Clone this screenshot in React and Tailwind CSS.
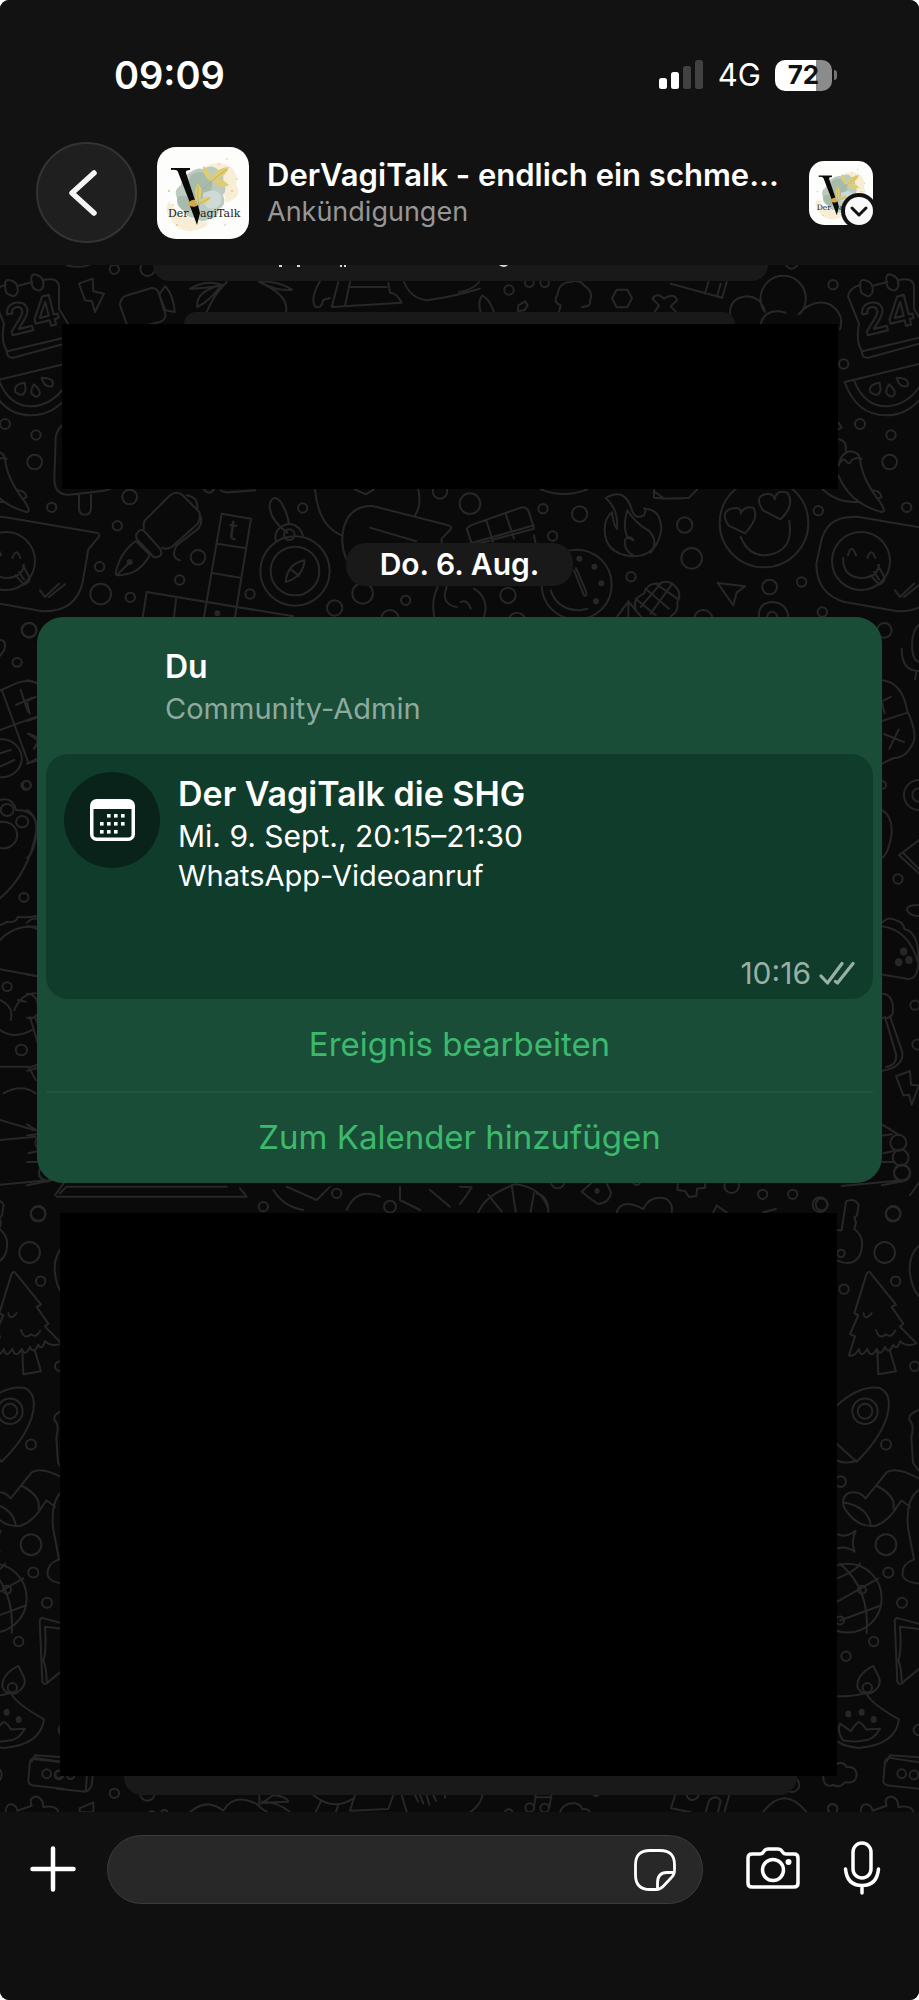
import React from "react";

/* Each sheet holds one region of the wallpaper: a placement, line art, rings and solid dots. */
const sheets = [
  {
    at: "translate(0 262) scale(.33333)",
    paths: [
      "M185 490q-18 20-18 40L163 650q0 50 45 48L300 688q25-3 32-8M237 698V738q0 20 18 20q18 0 18-20V698",
      "M237 65L278 50L280 88L312 95L285 150L276 118L255 115z",
      "M380 186L360 130q0-18 15-28L455 78q15 0 20 12L497 160q-3 15-18 20L440 190M478 97l18-25q25 30 28 78l-28-5z",
      "M570 80q50-30 100-10q-60 10-100 10M665 68q-80 20-73 67q40-20 73-67M680 60q-40 40-60 90M778 58q60 0 98 25q-50 5-98-25M778 60q90 40 80 90",
      "M960 58q-30 50-15 75q20 10 25-20l20-5M1015 60L995 135L1205 122q-15-30-35-30l-5-30M1050 60l-15 72M1050 75h110M1212 60q20 50 70 55q70-10 158-35",
      "M347 935q10-60 60-98L450 878q-30 55-80 60q-20 5-23-3zM355 935l32-32M410 815q12-20 25-5l45 50q10 20-5 24q-15 5-20-5l-42-45q-8-10-3-19z",
      "M432 800q-5-20 8-30L510 700q20-15 38 0L598 750q5 20-5 35L515 855q-15 8-28 3M560 700q35 5 32 40M600 760q10 20-5 40L530 850q-20 35 10 45",
      "M665 755L753 770L705 1065M665 755L612 1065M650 845L735 858M637 933L720 947M428 1065L440 990L880 1063M528 1012L522 1065",
      "M857 960q5-55 57-65q-5 50-57 65zM870 920l28 22M828 840q-10-45 40-55q35 5 42 40M862 812q-55-40-53-85q10-35 35-5q20 35 22 62",
      "M945 682q10 110 80 138M1255 682q10 50-10 78M1065 682l32 15 25-15M1038 890q-20-50-5-100q20-60 85-58L1345 790q15 5 5 14L1325 830V843M1110 797L1248 838",
      "M612 682q15 20 30 0M662 685q10 8 25 6L765 685M1303 1065q-10-50 10-90M1340 975q-20 50 30 60M200 10q40 10 70-2",
    ],
    circles: [[343,22,14],[443,20,22],[389,705,22],[352,791,14],[299,914,14],[302,996,31],[391,1006,14],[539,954,14],[594,886,22],[750,996,14],[908,738,14],[1320,688,22],[1088,994,31],[1217,1015,14],[1004,1038,23],[1170,1070,26],[885,927,104],[885,927,73],[868,818,16]],
    dots: [[389,900,6],[652,1054,6]],
  },
  {
    at: "translate(459 262) scale(.33333)",
    paths: [
      "M1205 68q-35 10-38 35L1200 185q-10 55 8 80q0 25 20 22L1400 240M1210 268L1390 225M1240 72L1285 60M1318 54q45-10 47 20V140L1395 190",
      "M1207 92q-12-45 12-37q25 5 22 35q-8 20-25 8q-6-2-9-6zM1284 70q-8-38 12-32q25 5 22 35q-8 20-25 8q-6-2-9-11z",
      "M1157 360L1385 305M1157 360q35 100 125 100q60 0 103-50M1185 355q30 78 98 78q60-3 100-60",
      "M1262 362q-35 5-28 28q25 20 31-8zM1290 367q-20 30 8 37q22-10-8-37zM1313 347q8 32 32 25q10-24-32-25z",
      "M1140 610q5-38 35-42q25 3 28 22q5 60 60 130q20 30 5 30q-95-25-130-110M1145 600q10-15 18 0q8 10 15-5q10-10 30-5M1140 532q25 5 20 35M1238 685q25 0 30 20l-10 5M1090 682q50 45 110 37M1138 482l10 15-10 5",
      "M1180 765q10-2 20 0L1478 812q12 4 5 14L1453 862L1436 960q-20 90-120 88L1157 1020q-85-25-85-115L1085 845q15-80 95-80z",
      "M1167 880q10-40 24 0M1225 888q12-35 24 0M1152 888q0 60 60 60q45-5 48-40M1235 940l25 28q25-10 12-30l-15-28M1245 930l15 22M1308 985l15 20 42-40M1335 1005l48-38",
      "M858 814L808 790q-30-50 25-52q15 3 12 17q10-25 38-18q20 30-25 77zM965 772L912 745q-30-45 15-50q20 3 20 17q5-30 38-20q25 35-20 80zM845 825q25 60 80 54q80-10 66-102",
      "M440 708q60-35 80 40q10 25 35 12q10-25 0-20q50 0 52 60q-10 85-90 83q-80-10-80-80q0-35 22-52q5 40 15 50q5-60-34-93zM505 745q25 40 65 62q30 30 5 65M505 745q-15 50 0 80q15 0 18 10q-30-20-25 15q5 20 25 30",
      "M35 790L185 737q20-5 25 15L225 800L40 850L23 800zM82 775l20 65M140 755l25 75M30 845L225 790M225 820l5 25",
      "M275 985q20 60 90 60l20-5M345 925l30 75q10 5 6-12l-30-70M475 1063l33-45 40 48M508 1018v45",
      "M776 963L858 973L833 992L823 1030zM900 1063q-2-42 42-43q40 3 46 43M925 1065q0-15 15-16q15 5 15 16M45 980q35 20 35 60l-5 25M5 1020q20-10 30 20",
      "M918 150q-10-45-55-47q-60 5-48 70M918 150a68 68 0 1 1 105 5M1018 157q45-50 95-30q45 30 30 75M905 185q15-50 75-33",
      "M473 83h32l14 26-14 27h-32l-14-27zM588 148l12-18-20-20q15-20 35 0q30-20 40 5l-20 18 15 15",
      "M300 150l5-20q-25-10-10-30q5-40 40-40q25-10 40 10q30 20 18 45q5 20-25 20M178 130l20-12 8 12-10 15-20 2zM65 150q-10-30 5-50q20 10 35 50M635 65L790 107L803 60M738 95l10-35M775 100l10-35",
      "M585 682v25q50 5 105 0l25-25M588 690l25 18M0 90q40-5 60-30M245 682q70 28 140 0M530 1010l60 50M560 980l70 60M590 965l65 45M640 965l-65 90M605 965l-60 70",
      "M530 1040q-10-30 25-45q10-35 45-30q30-15 50 10q20 20 5 45q5 30-20 43",
    ],
    circles: [[1122,68,14],[150,84,14],[1154,306,14],[1203,486,15],[1296,519,14],[1292,600,22],[1343,736,14],[1078,746,14],[33,725,31],[252,740,14],[362,756,23],[281,822,14],[677,789,23],[698,889,31],[516,944,14],[147,1000,23],[932,975,22],[1028,960,14],[1090,1050,14],[733,1072,28],[174,1078,26],[998,2,18],[1206,897,87],[915,783,133],[353,968,105],[211,62,13],[257,62,13]],
    dots: [[361,890,6],[406,914,6],[427,964,6],[411,1018,6]],
  },
  {
    at: "translate(860 610) scale(.33333 .37)",
    paths: [
      "M125 105q0 60 50 60M177 40q-25 20-20 70q5 30 20 30M170 165l-5 22",
      "M66 190q60 5 75 80q30 60 20 85q-20 45-60 45L66 415M66 300L140 278M88 375l28-52M72 335l60 22M70 245l22-10M66 250l8 30",
      "M66 540q35 20 28 70q-10 50-28 60M177 622L117 663L177 712M128 655l49 45M177 797q-40 0-36 15q10 15 36 15",
      "M66 845q20-20 45-5q20 5 22 22q45 10 42 85q0 50-30 50L66 985M66 855q80 10 107 95M66 1037q35 0 33 50q-5 20-33 15M75 1100L108 1200q5 30-30 35M90 1098L127 1195q5 40-60 50",
      "M108 1260L150 1246L153 1283L177 1285L155 1337L147 1310L130 1312zM66 1390L115 1418M66 1420l30-3M70 1468l30-6M66 1492h38M66 1555L130 1543",
    ],
    circles: [[73,55,22],[177,500,45],[177,500,20],[114,727,14],[165,1068,14],[172,1174,15],[115,1440,24],[122,1480,24],[126,1520,24],[66,473,12]],
    dots: [[131,923,8],[116,952,8],[147,946,8]],
    squash: 0.9,
  },
  {
    at: "translate(820 1170) scale(.33333 .421)",
    paths: [
      "M50 143L65 143L78 75q25-10 38 8l-5 25-8 5 5 12-5 15q35 20 18 60q-15 25-50 20l-20-5M65 38L240 25M270 60l27-30",
      "M150 243q-8-3-12 8L103 340L115 345L90 390L105 395L87 440q15 5 30-15q5 25 25 0q10 25 28 0q10 20 25-5q10 20 25-5q10 15 20-8q20 15 50 5L240 372L250 365L215 325L228 320zM172 430L175 485L228 478L210 430M130 340q5 20 25 0M168 380q10 25 30 10q15 10 28-8",
      "M50 560q70-50 130-42q40 15 20 70q-20 50-90 105L50 650M50 690q30 10 60 0",
      "M137 780L200 718q30-15 97 15M137 780q-20-20-50-13q-25 10-15 35q40 50 95 43q40-10 70-52l8-8 25 15M170 750q60 25 50 55M72 790q70 10 80 52M297 760q-40 20-33 90L282 925q-35 10-35 35q5 20 50 22",
      "M52 865q25 10 55-8q-15 25-3 50q-25-15-52-8M60 935q90 60 80 165M52 970q60-20 68-35M52 1025L175 970M60 1070L180 1035",
      "M224 1070q5-8 12-5L297 1078M224 1070L232 1215q5 8 12 5L297 1185M240 1085L297 1090M240 1085q5 60-5 80q10 20 10 50",
      "M52 1250q70 0 85-10q10 25 100 65q-10 60-120 68q-50-5-62-15M160 1178q-50 20-48 50q10 20 40 15q35-15 25-38q-10-15-17-27zM60 1315q-10 20 10 40q40 5 60 0q30 0 50-28l-42 2q-10-15-23-18q-15 10-22 22z",
      "M195 1405q5-10 20-8L297 1407M200 1405l10-15L297 1395M195 1405L190 1450q0 10 15 12L297 1470M122 1525q0-20 20-18q15 5 15 15L200 1510q-10-20 15-22q20 5 20 25q40-5 45 12M297 180q-30 20-28 60q5 40 28 60M297 570q-35 10-28 25q15 10 5 40l5 60 18 20",
    ],
    circles: [[219,105,22],[194,196,31],[227,264,14],[72,283,14],[284,466,14],[198,652,15],[198,890,31],[205,956,15],[246,1028,15],[161,1120,14],[78,1155,14],[38,1517,14],[62,740,16],[5,82,18],[63,198,11],[246,8,24],[135,573,38],[135,573,22],[83,1017,102],[126,997,12],[60,1070,12],[142,1230,14],[245,1434,13],[282,1437,13],[297,1330,16]],
    dots: [[85,1292,6],[125,1288,6],[161,1305,6]],
    squash: 0.8,
  },
  {
    at: "translate(0 600) scale(.357 .33333)",
    paths: [
      "M0 272L50 248Q75 238 102 248M5 270L80 490L102 482M0 390L102 350M58 270l20 65M45 315l45-22M78 400l26 20M95 445l10-15M0 460l30-10M0 500l40-20",
      "M0 600q35-10 45 30q60 0 57 60q-20 130-102 205M0 975q15-5 20-10q25 5 30-15q25 5 52-2M0 1020q40-45 102-40M0 1108L102 1128M40 1230q20-50 60-50M50 1200l22 5M0 1200q40 20 30 60M0 1290q40 30 90 0M0 1400h80l20 40M10 1480q50-30 90 0M0 1560l95 30M0 1620l100-10",
      "M0 120q20 0 12 30l-12 18",
    ],
    circles: [[81,90,21],[48,187,13],[73,556,13],[67,892,13],[20,1160,13],[4,475,57],[20,630,18],[62,665,17],[8,705,40],[60,1350,16]],
    dots: [],
  },
  {
    at: "translate(0 1750) scale(.33333)",
    paths: [
      "M105 28L262 44Q280 46 280 60L275 105q-5 15-18 20L170 116M262 60l-5 63M238 175L280 157V187L240 187z",
      "M570 187q50-45 100-5q30-55 100-20q20 20 30 22M785 155q50 0 85 32M778 165V135M785 160L820 135q40 5 45 20q-40 0-80 5M940 135q60 50 120 10M962 155l-15 32M1015 163l-7 22M1065 135L1050 182L1165 177L1180 135M1205 135l15 50M1245 135l10 20M1260 135l10 25M1280 135l8 30M1300 135l8 18M1335 135v8",
    ],
    circles: [[343,130,14],[442,130,22],[177,73,11],[212,76,11],[455,196,12],[493,190,10]],
    dots: [],
  },
  {
    at: "translate(460 1750) scale(.33333)",
    paths: [
      "M222 172l5-37M268 172l6-37M228 142h46M30 187q30-20 38-52M300 187q10-30 45-27q20 5 22 18q15-5 24 10M645 135l-12 40 60 12M680 135q5 17 20 15q15-5 15-15M737 187l10-35q20-20 35 0l-8 35M808 135l-15 52M908 187q65-85 132 0",
      "M1090 80q0 35 30 25q20 10 35-8q35 5 35-25q-5-25-30-20q-10-20-30-10",
    ],
    circles: [[209,173,13],[254,174,13],[146,190,12],[1118,177,14],[996,104,22],[408,128,10]],
    dots: [],
  },
  {
    at: "translate(460 900) scale(.33333)",
    paths: [
      "M55 937q20-50 100-80l10-5q80 10 100 75M85 885l40 50M155 855l12 80M222 880l-10 55M230 880q35 10 35 55M365 875L395 848M365 875q30 25 50 37q35-5 38-35L440 850",
      "M470 937q15-45 80-10q20-45 70-30q20 15 15 40M653 850v20l22 3 12 18 22-3 2-22 24-3v-12M760 937l10-20 30 20M910 937l38-10M0 860l35 2-20 30-15 20M520 850q10 10 20 0",
      "M-1200 880L-1180 860H-700M-1210 890H-640L-660 865M-560 870q30 50 90 60M-520 860l90 40 40-40M-340 930q30-70 100-40M-180 860v40l60 30M-90 870l60 50",
    ],
    circles: [[815,857,22],[908,883,14],[998,883,14],[1080,914,22],[1300,940,22],[293,845,20],[-590,920,14],[-370,880,14],[-210,920,18]],
    dots: [[411,873,5]],
  },
];

function Doodles() {
  return (
    <g id="doodles">
      {sheets.map((s) => (
        <g key={s.at} transform={s.at}>
          {s.paths.map((d) => (
            <path key={d} d={d} />
          ))}
          {s.circles.map(([x, y, r]) => (
            <ellipse key={`${x}-${y}-${r}`} cx={x} cy={y} rx={r} ry={r * (s.squash || 1)} />
          ))}
          {s.dots.map(([x, y, r]) => (
            <circle key={`${x}-${y}`} cx={x} cy={y} r={r} className="fill-[#272727]" />
          ))}
        </g>
      ))}
      <text x="865" y="336" fontSize="42" transform="rotate(-14 865 336)" className="font-semibold">
        24
      </text>
      <text x="227" y="539" fontSize="28" transform="rotate(8 227 539)" className="fill-[#272727] stroke-none">
        t
      </text>
    </g>
  );
}

function Wallpaper() {
  return (
    <svg
      aria-hidden="true"
      viewBox="0 265 919 1547"
      preserveAspectRatio="xMidYMin slice"
      className="absolute inset-0 h-full w-full fill-none stroke-[#272727] stroke-2 [&_*]:[vector-effect:non-scaling-stroke]"
      strokeLinecap="round"
      strokeLinejoin="round"
    >
      <Doodles />
      <use href="#doodles" x="-855" />
    </svg>
  );
}

function Logo({ className }) {
  return (
    <svg viewBox="0 0 92 92" className={className} role="img" aria-label="DerVagiTalk">
      <rect width="92" height="92" fill="#fdfdfc" />
      <g fill="#f3dfb0" opacity=".5">
        <path d="M47 20q14-8 27 0q8 8 5 18q6 8-2 14l-8 4q-2-18-22-36zM12 54q-6 10 2 18q6 12 20 12q14-2 18-8l-30-8z" />
      </g>
      <path fill="#bccbc0" d="M32 26q8-6 14-4q10-6 16 2q6 3 4 12q5 6 0 12q4 10-4 14q0 9-10 10q-8 5-13-1q-11 0-12-8q-8-2-7-12q-4-8 4-13q0-6 8-12z" />
      <path fill="#a0b5a6" d="M34 28q10-6 16 0q8 6 4 16q-6 10-16 7q-10-2-9-12zM20 50q10-4 16 4q2 8-5 11q-9 0-11-15z" opacity=".75" />
      <path fill="#cfdcda" d="M46 46q12-6 18 2q2 12-9 14q-10-1-9-16z" opacity=".9" />
      <g fill="#e0cd72">
        <path d="M52 34q8-14 20-14q-4 12-20 14zM53 34q-8-6-7-15q8 4 7 15zM56 34q9-4 16 4q-8 5-16-4zM41 55q-6-10 0-19q7 9 0 19zM42 56q5-8 12-6q-3 8-12 6zM38 55q-7 0-8-6q6-1 8 6z" />
      </g>
      <g fill="none" stroke="#b9a14b" strokeWidth=".6">
        <path d="M46 42q8-8 24-20M42 60q-2-10-1-22M42 57l11-6" />
      </g>
      <g fill="#dfc27d">
        <circle cx="70" cy="12" r=".8" />
        <circle cx="75" cy="44" r=".9" />
        <circle cx="80" cy="32" r=".8" />
        <circle cx="62" cy="17" r=".8" />
        <circle cx="12" cy="44" r="1" />
        <circle cx="20" cy="78" r=".9" />
        <circle cx="68" cy="78" r=".8" />
        <circle cx="16" cy="58" r=".8" />
      </g>
      <path fill="#0a0a0a" d="M14 21h19v2q-5 0-4 3l9 27-5 3-12-31q-1-3-7-2z" />
      <path fill="#d9a644" d="M31 56q4-4 7-3l3 5q-6 3-9 2z" />
      <path fill="#0a0a0a" d="M33 59q5 2 8-1l2 8-3 12z" />
      <text x="11" y="70" fontSize="11" className="fill-[#222] font-['DejaVu_Serif',serif]">
        Der
      </text>
      <text x="43" y="70" fontSize="11" className="fill-[#222] font-['DejaVu_Serif',serif]">
        agiTalk
      </text>
    </svg>
  );
}

function StatusBar() {
  return (
    <div className="flex items-center justify-between pt-[52px] pr-[82px] pl-[114px]">
      <time className="text-[38px] leading-[46px] font-semibold">09:09</time>
      <div className="flex items-center gap-[14px]">
        <svg viewBox="0 0 46 30" className="h-[30px] w-[46px]" aria-label="Signal">
          <rect x="1" y="18" width="8" height="11" rx="2.5" fill="#fff" />
          <rect x="13" y="12" width="8" height="17" rx="2.5" fill="#fff" />
          <rect x="25" y="6" width="8" height="23" rx="2.5" fill="#414141" />
          <rect x="37" y="0" width="8" height="29" rx="2.5" fill="#414141" />
        </svg>
        <span className="text-[31px] leading-10">4G</span>
        <div className="flex items-center gap-[2px]">
          <div className="flex h-[31px] w-[57px] items-center justify-center rounded-[10px] bg-linear-to-r from-white from-72% to-[#8b8b8b] to-72% text-[26px] leading-none font-bold text-[#111]">
            72
          </div>
          <div className="h-[10px] w-[3px] rounded-r-full bg-[#747474]" />
        </div>
      </div>
    </div>
  );
}

function Header() {
  return (
    <header className="h-[265px] bg-[#121212]">
      <StatusBar />
      <div className="flex items-center pt-11 pr-[46px] pl-9">
        <button
          aria-label="Zurück"
          className="flex size-[101px] shrink-0 items-center justify-center rounded-full border-2 border-[#333] bg-[#1f1f1f]"
        >
          <svg viewBox="0 0 40 48" className="mr-2 h-12 w-10 fill-none stroke-[#f4f4f4]" strokeWidth="5.5" strokeLinecap="round" strokeLinejoin="round">
            <path d="M31 4L9 24L31 44" />
          </svg>
        </button>
        <Logo className="ml-5 size-[92px] shrink-0 rounded-[19px]" />
        <div className="ml-[18px] min-w-0 flex-1">
          <h1 className="truncate text-[31px] leading-[38px] font-semibold">DerVagiTalk - endlich ein schme…</h1>
          <p className="text-[27px] leading-9 text-[#969696]">Ankündigungen</p>
        </div>
        <button aria-label="Community" className="relative ml-3 shrink-0">
          <Logo className="size-16 rounded-[15px]" />
          <svg viewBox="0 0 36 36" className="absolute -right-1 -bottom-1 size-9">
            <circle cx="18" cy="18" r="18" fill="#121212" />
            <circle cx="18" cy="18" r="14" fill="#fafafa" />
            <path d="M11 15l7 7 7-7" fill="none" stroke="#121212" strokeWidth="3" strokeLinecap="round" strokeLinejoin="round" />
          </svg>
        </button>
      </div>
    </header>
  );
}

function CalendarIcon() {
  const dots = [[18,18],[25,18],[32,18],[11,26],[18,26],[25,26],[32,26],[11,34],[18,34],[25,34]];
  return (
    <svg viewBox="0 0 45 42" className="h-[42px] w-[45px]" aria-hidden="true">
      <rect x="1.75" y="1.75" width="41.5" height="38.5" rx="5" fill="none" stroke="#fff" strokeWidth="3.5" />
      <path d="M1 10V6q0-5 5-5h33q5 0 5 5v4z" fill="#fff" />
      {dots.map(([x, y]) => (
        <rect key={`${x}-${y}`} x={x - 1} y={y - 3} width="3.6" height="3.6" fill="#fff" />
      ))}
    </svg>
  );
}

function EventCard() {
  return (
    <article className="mt-[31px] mr-[37px] ml-[37px] rounded-[26px] bg-[#194d38] px-[9px]">
      <div className="flex h-[137px] flex-col pt-[29px] pl-[119px]">
        <h2 className="text-[32px] leading-[42px] font-semibold">Du</h2>
        <p className="text-[29px] leading-[42px] text-[#8eaa9d]">Community-Admin</p>
      </div>
      <div className="flex h-[245px] rounded-[22px] bg-[#103c2b] px-[18px]">
        <div className="mt-[18px] flex size-24 shrink-0 items-center justify-center rounded-full bg-[#09231a]">
          <CalendarIcon />
        </div>
        <div className="ml-[18px] flex flex-1 flex-col pt-[17px]">
          <h3 className="text-[34px] leading-[45px] font-semibold">Der VagiTalk die SHG</h3>
          <p className="text-[30px] leading-10">Mi. 9. Sept., 20:15–21:30</p>
          <p className="text-[29px] leading-10">WhatsApp-Videoanruf</p>
          <div className="mt-auto flex items-center justify-end gap-2 pb-[8px] text-[#98b0a5]">
            <time className="text-[30px] leading-9">10:16</time>
            <svg viewBox="0 0 36 24" className="h-6 w-9 fill-none stroke-current" strokeWidth="3.2" strokeLinecap="round" strokeLinejoin="round" aria-label="Zugestellt">
              <path d="M2 15l6.500 7L23 2.500M16.500 20.500l2 1.500L34 2.500" />
            </svg>
          </div>
        </div>
      </div>
      <button className="block h-[92px] w-full text-[33px] text-[#3cb96c]">Ereignis bearbeiten</button>
      <button className="block h-[92px] w-full border-t-2 border-[#215440] text-[33px] text-[#3cb96c]">
        Zum Kalender hinzufügen
      </button>
    </article>
  );
}

function Chat() {
  return (
    <main className="relative bg-[#0a0a0a]">
      <Wallpaper />
      <div className="relative flex flex-col pb-[17px]">
        <div className="mr-[151px] ml-[153px] h-4 rounded-b-[18px] bg-[#191919]">
          <svg viewBox="0 0 615 4" className="h-1 w-full" fill="#d8d8d8" aria-hidden="true">
            <path d="M126 0h3v2h-3zM144 0h3v2h-3zM187 0h2v2h-2zM191 0h2v2h-2zM346 0h9q-4 4-9 0z" />
          </svg>
        </div>
        <div className="mt-[31px] mr-[184px] ml-[184px] h-3 rounded-t-[16px] bg-[#191919]" />
        <div className="mr-[81px] ml-[62px] h-[165px] bg-black" />
        <div className="mt-[54px] self-center rounded-[20px] bg-[#191919] px-[34px] text-[30px] leading-[43px] font-semibold">
          Do. 6. Aug.
        </div>
        <EventCard />
        <div className="mt-[30px] mr-[82px] ml-[60px] h-[563px] bg-black" />
        <div className="mr-[122px] ml-[124px] h-[19px] rounded-b-[18px] bg-[#191919]" />
      </div>
    </main>
  );
}

function Composer() {
  return (
    <footer className="flex h-[188px] items-start bg-[#101010] pt-[23px] pr-[38px] pl-7">
      <button aria-label="Anhang hinzufügen" className="flex h-[68px] w-[50px] items-center justify-center">
        <svg viewBox="0 0 46 46" className="size-[46px] stroke-white" strokeWidth="4.5" strokeLinecap="round">
          <path d="M23 2.500V43.500M2.500 23H43.500" />
        </svg>
      </button>
      <div className="ml-[29px] flex h-[69px] min-w-0 flex-1 items-center rounded-full border border-[#3c3c3c] bg-[#282828] pr-[26px] pl-8">
        <input aria-label="Nachricht" className="min-w-0 flex-1 bg-transparent text-[32px] outline-none" />
        <button aria-label="Sticker">
          <svg viewBox="0 0 42 42" className="size-[42px] fill-none stroke-white" strokeWidth="2.8" strokeLinecap="round" strokeLinejoin="round">
            <path d="M21 1.500H16Q1.500 1.500 1.500 16V26Q1.500 40.500 16 40.500H22Q26 40.500 29 37.500L37 29Q40.500 26 40.500 21V16Q40.500 1.500 26 1.500z" />
            <path d="M23.500 40V34Q23.500 23.500 33 23.500H39" />
          </svg>
        </button>
      </div>
      <button aria-label="Kamera" className="ml-[43px] flex h-[66px] items-center">
        <svg viewBox="0 0 54 42" className="h-[42px] w-[54px] fill-none stroke-white" strokeWidth="3.5" strokeLinejoin="round">
          <path d="M2 11Q2 7 6 7H14Q16 7 17 5.500L19 3Q20 2 22 2H32Q34 2 35 3L37 5.500Q38 7 40 7H48Q52 7 52 11V36Q52 40 48 40H6Q2 40 2 36z" />
          <circle cx="27" cy="23" r="10.500" />
          <circle cx="42.500" cy="15" r="3" className="fill-white stroke-none" />
        </svg>
      </button>
      <button aria-label="Sprachnachricht" className="ml-[43px] flex h-[66px] items-center">
        <svg viewBox="0 0 38 54" className="h-[54px] w-[38px] fill-none stroke-white" strokeWidth="3.5" strokeLinecap="round">
          <rect x="10" y="2" width="18" height="35" rx="9" />
          <path d="M2.500 28Q4 44.500 19 44.500Q34 44.500 35.500 28M19 45V52" />
        </svg>
      </button>
    </footer>
  );
}

export default function App() {
  return (
    <div className="bg-white">
      <div className="overflow-hidden rounded-[9px] bg-[#101010] font-['Inter',sans-serif] text-white">
        <Header />
        <Chat />
        <Composer />
      </div>
    </div>
  );
}
